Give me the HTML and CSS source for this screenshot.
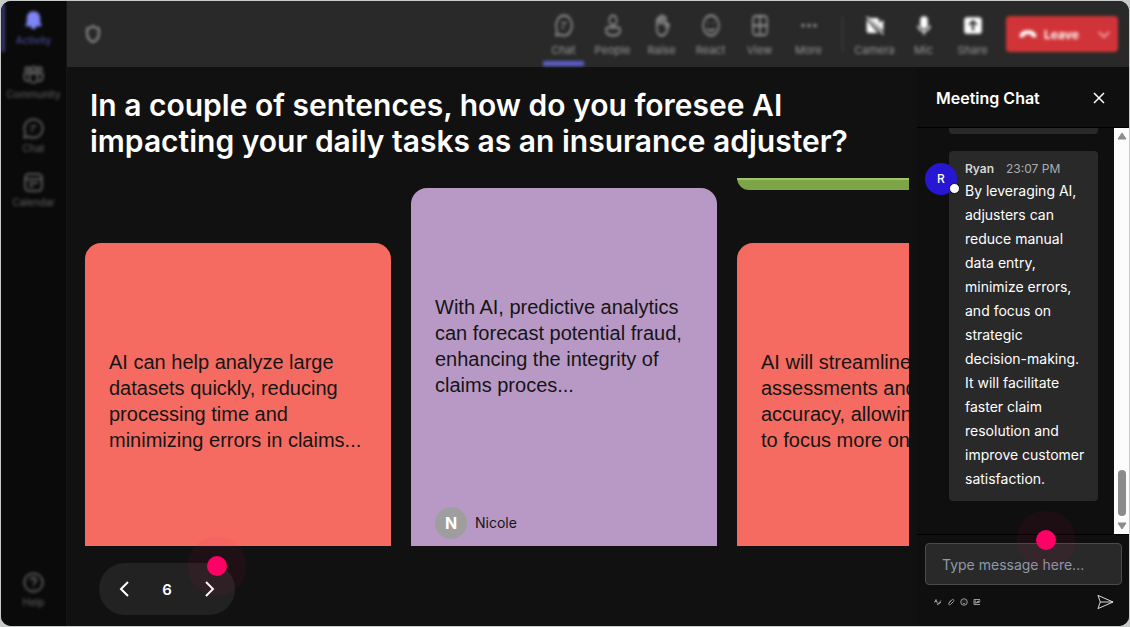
FILE: index.html
```html
<!DOCTYPE html>
<html lang="en">
<head>
<meta charset="utf-8">
<meta name="viewport" content="width=device-width, initial-scale=1">
<title>Meeting</title>
<link rel="stylesheet" href="styles.css">
</head>
<body>
<div class="app">
  <nav class="rail" aria-label="Main">
    <div class="rail-inner">
      <a class="rail-item active" href="#activity">
        <svg viewBox="0 0 24 24" class="icon solid"><path d="M12 1.500c-4.600 0-7.600 3.300-7.600 7.700v4.600L2.500 18.500h6.300c.3 2 1.500 3.500 3.200 3.500s2.900-1.500 3.200-3.500h6.300l-1.900-4.700V9.200c0-4.400-3-7.700-7.600-7.700z"/></svg>
        <span>Activity</span>
      </a>
      <a class="rail-item" href="#community">
        <svg viewBox="0 0 24 24" class="icon"><circle cx="12" cy="6" r="3"/><circle cx="5" cy="6" r="2.500"/><circle cx="19" cy="6" r="2.500"/><path d="M7.500 11h9v6a4.500 4.500 0 0 1-9 0zM7 11H1.500v4.500a4 4 0 0 0 5.500 3.700M17 11h5.500v4.500a4 4 0 0 1-5.500 3.700"/></svg>
        <span>Community</span>
      </a>
      <a class="rail-item" href="#chat">
        <svg viewBox="0 0 24 24" class="icon"><path d="M12 1.500a10.500 10.500 0 1 1-4.800 19.800L1.500 22.500l1.200-5.700A10.500 10.500 0 0 1 12 1.500z"/><path d="M9 9.500h6M9 14h3"/></svg>
        <span>Chat</span>
      </a>
      <a class="rail-item" href="#calendar">
        <svg viewBox="0 0 24 24" class="icon"><rect x="2.500" y="2.500" width="19" height="19" rx="4"/><path d="M2.500 8h19M7 12.500h10M7 16.500h5"/></svg>
        <span>Calendar</span>
      </a>
      <a class="rail-item rail-help" href="#help">
        <svg viewBox="0 0 24 24" class="icon"><circle cx="12" cy="12" r="10.500"/><path d="M9 9.500c0-4 6-4 6 0 0 2.500-3 2.500-3 5M12 17v1.500"/></svg>
        <span>Help</span>
      </a>
    </div>
  </nav>

  <div class="main">
    <header class="topbar">
      <div class="topbar-inner">
        <svg viewBox="0 0 24 24" class="shield"><path d="M12 2.500c2.500 2 5 2.800 7 3v6c0 5-2.500 8.500-7 10.500-4.500-2-7-5.500-7-10.500v-6c2-.2 4.500-1 7-3z"/></svg>
        <div class="tools">
          <button class="tool selected" type="button">
            <svg viewBox="0 0 24 24" preserveAspectRatio="none" class="icon"><path d="M12 1.500a10.500 10.500 0 1 1-4.800 19.800L1.500 22.500l1.200-5.700A10.500 10.500 0 0 1 12 1.500z"/><path d="M9 9.500h6M9 14h3"/></svg>
            <span>Chat</span>
          </button>
          <button class="tool" type="button">
            <svg viewBox="0 0 24 24" preserveAspectRatio="none" class="icon"><circle cx="12" cy="6.500" r="5"/><path d="M5 14h14a2.500 2.500 0 0 1 2.500 2.500c0 4-4 6-9.500 6s-9.500-2-9.500-6A2.500 2.500 0 0 1 5 14z"/></svg>
            <span>People</span>
          </button>
          <button class="tool" type="button">
            <svg viewBox="0 0 24 24" preserveAspectRatio="none" class="icon"><path d="M5 14V6a1.600 1.600 0 0 1 3 0V3.500a1.600 1.600 0 0 1 3 0V2.500a1.600 1.600 0 0 1 3 0V4a1.600 1.600 0 0 1 3 0v9l2-2.500c1-1 2.800 0 2.200 1.300C19 18 17 22.500 11.500 22.500 7 22.500 5 19 5 14zM8 5v6M11 4v7M14 4v7"/></svg>
            <span>Raise</span>
          </button>
          <button class="tool" type="button">
            <svg viewBox="0 0 24 24" preserveAspectRatio="none" class="icon"><circle cx="12" cy="12" r="10.500"/><path d="M7 15c2.500 3.500 7.500 3.500 10 0M8.500 8.500v1.500M15.500 8.500v1.500"/></svg>
            <span>React</span>
          </button>
          <button class="tool" type="button">
            <svg viewBox="0 0 24 24" preserveAspectRatio="none" class="icon"><rect x="2.500" y="2" width="19" height="20" rx="4"/><path d="M12 2v20M2.500 12h19"/></svg>
            <span>View</span>
          </button>
          <button class="tool" type="button">
            <svg viewBox="0 0 24 24" class="icon solid"><circle cx="4" cy="12" r="2.300"/><circle cx="12" cy="12" r="2.300"/><circle cx="20" cy="12" r="2.300"/></svg>
            <span>More</span>
          </button>
          <span class="divider"></span>
          <button class="tool bright" type="button">
            <svg viewBox="0 0 24 24" class="icon solid"><path d="M5 3h9a3 3 0 0 1 3 3v3l5-3.500v13L6 4zM2 5l13.500 16H5a3 3 0 0 1-3-3z"/><path class="stroke" d="M2 1.500l20 21"/></svg>
            <span>Camera</span>
          </button>
          <button class="tool bright" type="button">
            <svg viewBox="0 0 24 24" class="icon solid"><rect x="7.500" y="1" width="9" height="15" rx="4.500"/><path class="stroke" d="M5 12c0 9 14 9 14 0M12 19v4"/></svg>
            <span>Mic</span>
          </button>
          <button class="tool bright" type="button">
            <svg viewBox="0 0 24 24" class="icon solid"><path fill-rule="evenodd" d="M5 2h14a3.500 3.500 0 0 1 3.500 3.500v13A3.500 3.500 0 0 1 19 22H5a3.500 3.500 0 0 1-3.500-3.500v-13A3.500 3.500 0 0 1 5 2zm7 3l-5.500 5.500 1.500 1.500 2.700-2.500V18h2.600V9.500L16 12l1.500-1.500z"/></svg>
            <span>Share</span>
          </button>
        </div>
        <button class="leave" type="button">
          <svg viewBox="0 0 24 12" class="phone"><path d="M12 1C6 1 2 3.500 1 7c-.5 2 .2 4 1.500 3.800l4-.8c1-.3 1-1.500 1.200-3 2.500-1 6.100-1 8.600 0 .2 1.500.2 2.700 1.200 3l4 .8c1.300.2 2-1.800 1.500-3.800-1-3.500-5-6-11-6z"/></svg>
          <span>Leave</span>
          <svg viewBox="0 0 14 10" class="caret"><path d="M1 2l6 6 6-6"/></svg>
        </button>
      </div>
    </header>

    <div class="content">
      <main class="board">
        <h1 class="question">In a couple of sentences, how do you foresee AI impacting your daily tasks as an insurance adjuster?</h1>
        <section class="wall" aria-label="Responses">
          <div class="column low">
            <article class="card coral"><p>AI can help analyze large datasets quickly, reducing processing time and minimizing errors in claims...</p></article>
          </div>
          <div class="column high">
            <article class="card lilac">
              <p>With AI, predictive analytics can forecast potential fraud, enhancing the integrity of claims proces...</p>
              <footer class="author"><span class="initial">N</span><span>Nicole</span></footer>
            </article>
          </div>
          <div class="column">
            <article class="card-end"></article>
            <article class="card coral"><p>AI will streamline<br>assessments and<br>accuracy, allowing<br>to focus more on</p></article>
          </div>
        </section>
        <div class="pager">
          <button type="button" aria-label="Previous"><svg viewBox="0 0 10 16" class="chevron"><path d="M8.500 1L1.500 8l7 7"/></svg></button>
          <span>6</span>
          <button type="button" aria-label="Next"><svg viewBox="0 0 10 16" class="chevron"><path d="M1.500 1l7 7-7 7"/></svg></button>
          <i class="pulse"></i>
        </div>
      </main>

      <aside class="chat">
        <header class="chat-head">
          <h2>Meeting Chat</h2>
          <button type="button" aria-label="Close"><svg viewBox="0 0 12 12" class="close"><path d="M1 1l10 10M11 1L1 11"/></svg></button>
        </header>
        <div class="feed">
          <div class="messages">
            <div class="bubble-end"></div>
            <div class="message">
              <div class="avatar">R<i class="status"></i></div>
              <div class="bubble">
                <div class="meta"><b>Ryan</b><time>23:07 PM</time></div>
                <p>By leveraging AI, adjusters can reduce manual data entry, minimize errors, and focus on strategic decision-making. It will facilitate faster claim resolution and improve customer satisfaction.</p>
              </div>
            </div>
          </div>
          <div class="scrollbar">
            <svg viewBox="0 0 10 8" class="arrow"><path d="M5 1l4 6H1z"/></svg>
            <span class="thumb"></span>
            <svg viewBox="0 0 10 8" class="arrow"><path d="M5 7l4-6H1z"/></svg>
          </div>
        </div>
        <form class="composer">
          <input type="text" aria-label="Message" placeholder="Type message here...">
          <div class="composer-tools">
            <button type="button" aria-label="Format"><svg viewBox="0 0 16 16" class="mini"><path d="M1 9l3-6 3 8M2 7h4M6 14l8-9M9 13l5-5"/></svg></button>
            <button type="button" aria-label="Attach"><svg viewBox="0 0 16 16" class="mini"><path d="M4 9l5-5c3-3 6 0 4 3l-6 6c-3 2-5-1-3-3l5-5"/></svg></button>
            <button type="button" aria-label="Emoji"><svg viewBox="0 0 16 16" class="mini"><circle cx="8" cy="8" r="6.500"/><path d="M5 9.500c1.500 2.500 4.500 2.500 6 0M6 5.500v1M10 5.500v1"/></svg></button>
            <button type="button" aria-label="GIF"><svg viewBox="0 0 16 16" class="mini"><path d="M14 3H2v10h12M6 6H4v4h3V8M9 6v4M11 10V6h4M11 8h3"/></svg></button>
            <button class="send" type="submit" aria-label="Send"><svg viewBox="0 0 18 16" class="plane"><path d="M1 1l16 7-16 7 2.500-7zM3.500 8H17"/></svg></button>
          </div>
          <i class="pulse"></i>
        </form>
      </aside>
    </div>
  </div>
</div>
</body>
</html>
```
FILE: styles.css
```css
* { box-sizing: border-box; }
body {
  margin: 0;
  height: 100vh;
  padding: 1px;
  background: #c9cbca;
  font-family: Inter, "Liberation Sans", sans-serif;
  color: #fff;
}
h1, h2, p { margin: 0; }
button { border: 0; padding: 0; background: none; color: inherit; font: inherit; display: flex; align-items: center; }
svg { display: block; fill: none; stroke: currentColor; flex: none; }
.app { display: flex; height: 100%; overflow: hidden; border-radius: 10px; background: #111; }
.rail { flex: none; width: 66px; background: #0a0a0a; border-right: 1px solid #151515; }
.rail-inner { height: 100%; display: flex; flex-direction: column; gap: 6px; padding: 3px 0 12px; filter: blur(1px) blur(1px); }
.rail-item {
  height: 48px;
  display: flex; flex-direction: column; align-items: center; justify-content: center; gap: 3px;
  color: #666; text-decoration: none; font-size: 10px; line-height: 12px;
}
.rail-item.active { border-left: 4px solid #35386f; padding-right: 4px; color: #5357b0; }
.rail-item.active .icon { color: #7f85f5; }
.rail-help { margin-top: auto; }
.icon { width: 21px; height: 21px; stroke-width: 2; }
.icon.solid { fill: currentColor; stroke: none; }
.icon .stroke { fill: none; stroke: currentColor; stroke-width: 2; }
.main { flex: 1; min-width: 0; display: flex; flex-direction: column; }
.topbar { flex: none; height: 66px; background: #292929; }
.topbar-inner { height: 100%; display: flex; align-items: center; padding: 0 11px 0 16px; filter: blur(1px) blur(1px); }
.shield { width: 20px; height: 22px; stroke: #a8a8a8; stroke-width: 2; }
.tools { display: flex; align-self: stretch; margin-left: auto; }
.tool {
  width: 49px; padding: 2px 0 0;
  flex-direction: column; justify-content: center; gap: 6px; position: relative;
  color: #9a9a9a; font-size: 11px; line-height: 14px;
}
.tool .icon { width: 18px; height: 23px; }
.tool.selected::after { content: ""; position: absolute; left: 4px; right: 4px; bottom: 1px; height: 5px; background: #5b5fc7; }
.tool.bright .icon { width: 20px; color: #fff; }
.divider { width: 1px; height: 36px; margin: auto 7px auto 9px; background: #444; }
.leave {
  width: 112px; height: 36px; margin-left: 9px; padding: 0 8px 0 13px; gap: 7px;
  background: #d13438; border-radius: 4px; font-size: 12px; font-weight: 700; color: #fff;
}
.phone { width: 18px; height: 10px; fill: currentColor; stroke: none; }
.caret { width: 12px; height: 9px; margin-left: auto; stroke: #f6b0b2; stroke-width: 2; }
.content { flex: 1; min-height: 0; display: flex; }
.board { flex: 1; min-width: 0; display: flex; flex-direction: column; align-items: flex-start; padding: 20px 8px 11px 18px; }
.question { padding: 0 50px 0 5px; font-size: 30px; line-height: 36px; font-weight: 600; }
.wall {
  flex: 1; min-height: 0; align-self: stretch; margin-top: 19px;
  display: flex; gap: 20px; overflow: hidden;
  color: #151515; font-family: "Liberation Sans", Arial, sans-serif; font-size: 20px; line-height: 26px;
}
.column { flex: none; width: 306px; }
.column.low { padding-top: 65px; }
.column.high { padding-top: 10px; }
.card { height: 380px; padding: 106px 24px 10px; border-radius: 16px; display: flex; flex-direction: column; }
.coral { background: #f56b61; }
.lilac { background: #b899c6; }
.card-end { height: 12px; margin-bottom: 53px; background: #7da446; border-top: 2px solid #a0c36b; border-radius: 0 0 16px 16px; }
.author { margin-top: 109px; display: flex; align-items: center; gap: 8px; font-family: Inter, sans-serif; font-size: 14px; line-height: 20px; }
.initial { width: 32px; height: 32px; border-radius: 50%; background: #9e9e9e; color: #fff; font-size: 16px; line-height: 32px; font-weight: 700; text-align: center; }
.pager {
  position: relative; flex: none; width: 136px; height: 52px; margin: 17px 0 0 14px; padding: 0 20px;
  display: flex; align-items: center; justify-content: space-between;
  border-radius: 26px; background: #222; font-size: 15px; font-weight: 600;
}
.chevron { width: 11px; height: 16px; stroke-width: 2; }
.pulse {
  position: absolute; width: 20px; height: 20px; border-radius: 50%;
  background: #ff0066; box-shadow: 0 0 0 19px rgba(255, 0, 102, .06);
}
.pager .pulse { right: 8px; top: -7px; }
.chat { flex: none; width: 212px; display: flex; flex-direction: column; background: #0f0f0f; }
.chat-head { flex: none; height: 61px; padding: 2px 24px 0 19px; display: flex; align-items: center; justify-content: space-between; border-bottom: 1px solid #000; }
.chat-head h2 { font-size: 16px; line-height: 24px; font-weight: 600; }
.close { width: 12px; height: 12px; stroke-width: 1.5; }
.feed { flex: 1; min-height: 0; display: flex; }
.messages { flex: 1; min-width: 0; padding: 0 16px 0 8px; overflow: hidden; }
.bubble-end { height: 6px; margin: 0 0 17px 24px; background: #292929; border-radius: 0 0 4px 4px; }
.message { display: flex; }
.avatar {
  position: relative; z-index: 1; flex: none; width: 32px; height: 32px; margin: 12px -8px 0 0; border-radius: 50%;
  background: #2717d2; font-size: 12px; line-height: 32px; font-weight: 500; text-align: center;
}
.status { position: absolute; right: -3px; bottom: 1px; width: 11px; height: 11px; border-radius: 50%; background: #fff; border: 1px solid #111; }
.bubble { flex: 1; min-width: 0; padding: 8px 12px 10px 16px; background: #292929; border-radius: 4px; font-size: 14px; line-height: 24px; }
.meta { display: flex; gap: 12px; font-size: 12px; line-height: 20px; color: #adadad; }
.meta b { font-weight: 600; color: #d6d6d6; }
.scrollbar { flex: none; width: 15px; padding: 4px 0; background: #fcfcfc; display: flex; flex-direction: column; align-items: center; }
.arrow { width: 10px; height: 8px; fill: #8b8b8b; stroke: #8b8b8b; }
.thumb { width: 8px; height: 46px; margin: auto 0 6px; border-radius: 4px; background: #8b8b8b; }
.composer { position: relative; flex: none; padding: 8px 7px 16px 8px; border-top: 1px solid #000; }
.composer input {
  display: block; width: 100%; height: 42px; padding: 0 16px; border: 1px solid #4a4a4a; border-radius: 4px;
  background: #292929; color: #fff; font: 14px/20px Inter, sans-serif;
}
.composer input::placeholder { color: #8e9aa8; opacity: 1; }
.composer-tools { display: flex; align-items: center; gap: 5px; margin-top: 9px; padding: 0 8px 0 9px; color: #9a9a9a; }
.mini { width: 8px; height: 8px; stroke-width: 2; }
.send { margin-left: auto; color: #e8e8e8; }
.plane { width: 17px; height: 16px; stroke-width: 1; stroke-linejoin: round; }
.composer .pulse { right: 73px; top: -5px; }
```
